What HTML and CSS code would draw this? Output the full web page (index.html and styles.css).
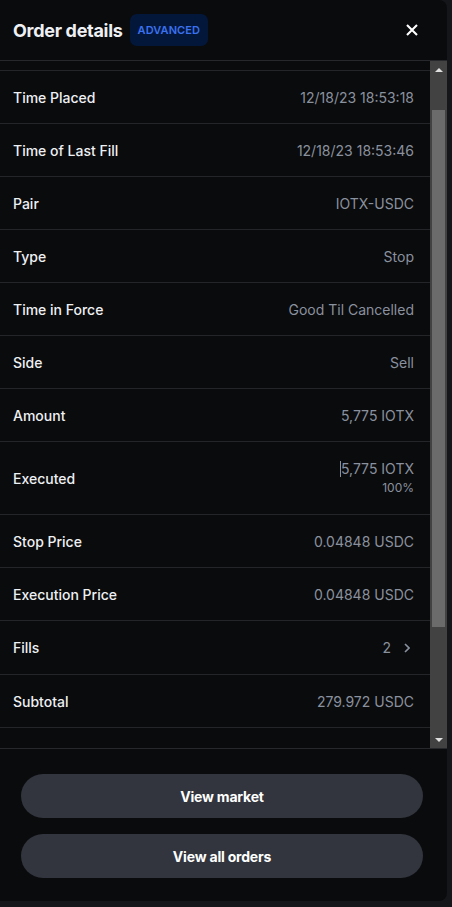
FILE: index.html
```html
<!DOCTYPE html>
<html lang="en">

<head>
    <meta charset="UTF-8">
    <meta name="viewport" content="width=device-width, initial-scale=1.0">
    <link rel="stylesheet" href="styles.css">
    <title>Order details</title>
</head>

<body>
    <div class="panel">
        <div class="header">
            <h1 class="title">Order details</h1>
            <span class="badge">ADVANCED</span>
            <button class="close" type="button" aria-label="Close">
                <svg width="12" height="12" viewBox="0 0 12 12">
                    <path d="M1 1L11 11M11 1L1 11" stroke="#fff" stroke-width="2.1" />
                </svg>
            </button>
        </div>

        <div class="scroll">
            <div class="list">
                <div class="row row-cut"></div>
                <div class="row"><span class="label">Time Placed</span><span class="value">12/18/23 18:53:18</span></div>
                <div class="row"><span class="label">Time of Last Fill</span><span class="value">12/18/23 18:53:46</span></div>
                <div class="row"><span class="label">Pair</span><span class="value">IOTX-USDC</span></div>
                <div class="row"><span class="label">Type</span><span class="value">Stop</span></div>
                <div class="row"><span class="label">Time in Force</span><span class="value">Good Til Cancelled</span></div>
                <div class="row"><span class="label">Side</span><span class="value">Sell</span></div>
                <div class="row"><span class="label">Amount</span><span class="value">5,775 IOTX</span></div>
                <div class="row row-tall">
                    <span class="label">Executed</span>
                    <div class="value-stack">
                        <span class="value"><span class="caret"></span>5,775 IOTX</span>
                        <span class="value-sub">100%</span>
                    </div>
                </div>
                <div class="row"><span class="label">Stop Price</span><span class="value">0.04848 USDC</span></div>
                <div class="row"><span class="label">Execution Price</span><span class="value">0.04848 USDC</span></div>
                <div class="row row-link">
                    <span class="label">Fills</span>
                    <span class="value">2
                        <svg class="chevron" width="6" height="10" viewBox="0 0 6 10">
                            <path d="M1 1L5 5L1 9" fill="none" stroke="#8a919e" stroke-width="1.6" />
                        </svg>
                    </span>
                </div>
                <div class="row"><span class="label">Subtotal</span><span class="value">279.972 USDC</span></div>
                <div class="row"></div>
            </div>
            <div class="scrollbar">
                <div class="arrow arrow-up"></div>
                <div class="track">
                    <div class="thumb"></div>
                </div>
                <div class="arrow arrow-down"></div>
            </div>
        </div>

        <div class="footer">
            <button class="btn" type="button">View market</button>
            <button class="btn" type="button">View all orders</button>
        </div>
    </div>
</body>

</html>
```

FILE: styles.css
```css
body {
    margin: 0;
    background-color: #15161a;
    font-family: Inter, "Noto Sans", sans-serif;
    color: #eef0f3;
}

.panel {
    width: 447px;
    height: 901px;
    background-color: #0a0b0d;
    border-radius: 0 8px 8px 0;
    display: flex;
    flex-direction: column;
    overflow: hidden;
}

.header {
    height: 60px;
    display: flex;
    align-items: center;
    padding: 0 16px 0 13px;
    border-bottom: 1px solid #26282c;
}

.title {
    margin: 0;
    font-size: 18px;
    font-weight: 700;
    letter-spacing: -0.3px;
}

.badge {
    margin-left: 7px;
    height: 32px;
    padding: 0 8px;
    display: flex;
    align-items: center;
    border-radius: 7px;
    background-color: #03173b;
    color: #3a71ee;
    font-size: 11px;
    font-weight: 600;
    letter-spacing: 0.1px;
}

.close {
    margin-left: auto;
    margin-right: 13px;
    padding: 0;
    background: none;
    border: none;
    display: flex;
}

.scroll {
    height: 687px;
    display: flex;
}

.list {
    flex: 1;
    overflow: hidden;
}

.row {
    height: 52px;
    display: flex;
    align-items: center;
    justify-content: space-between;
    padding: 0 16px 0 13px;
    border-bottom: 1px solid #232529;
    font-size: 14px;
}

.row-cut {
    height: 9px;
}

.row-tall {
    height: 72px;
}

.row-link {
    height: 53px;
}

.label {
    font-weight: 500;
    color: #eef0f3;
}

.value {
    color: #8a919e;
    display: flex;
    align-items: center;
}

.value-stack {
    display: flex;
    flex-direction: column;
    align-items: flex-end;
    gap: 3px;
    margin-top: -1px;
}

.value-sub {
    color: #8a919e;
    font-size: 12px;
}

.caret {
    width: 1px;
    height: 16px;
    background-color: #8a919e;
}

.chevron {
    margin-left: 13px;
    margin-right: 4px;
}

.scrollbar {
    width: 17px;
    background-color: #424242;
    display: flex;
    flex-direction: column;
}

.arrow {
    height: 17px;
    display: flex;
    align-items: center;
    justify-content: center;
}

.arrow::after {
    content: "";
    border-left: 4px solid transparent;
    border-right: 4px solid transparent;
}

.arrow-up::after {
    border-bottom: 4px solid #e0e0e0;
}

.arrow-down::after {
    border-top: 4px solid #e0e0e0;
}

.track {
    flex: 1;
    padding: 0 2px;
}

.thumb {
    margin-top: 32px;
    height: 517px;
    background-color: #6b6b6b;
}

.footer {
    flex: 1;
    border-top: 1px solid #26282c;
    padding: 25px 24px 0 21px;
    display: flex;
    flex-direction: column;
    gap: 16px;
}

.btn {
    height: 44px;
    border: none;
    border-radius: 22px;
    background-color: #32353d;
    color: #fff;
    font-family: Inter, "Noto Sans", sans-serif;
    font-size: 14px;
    font-weight: 700;
    letter-spacing: -0.2px;
    cursor: pointer;
}
```
